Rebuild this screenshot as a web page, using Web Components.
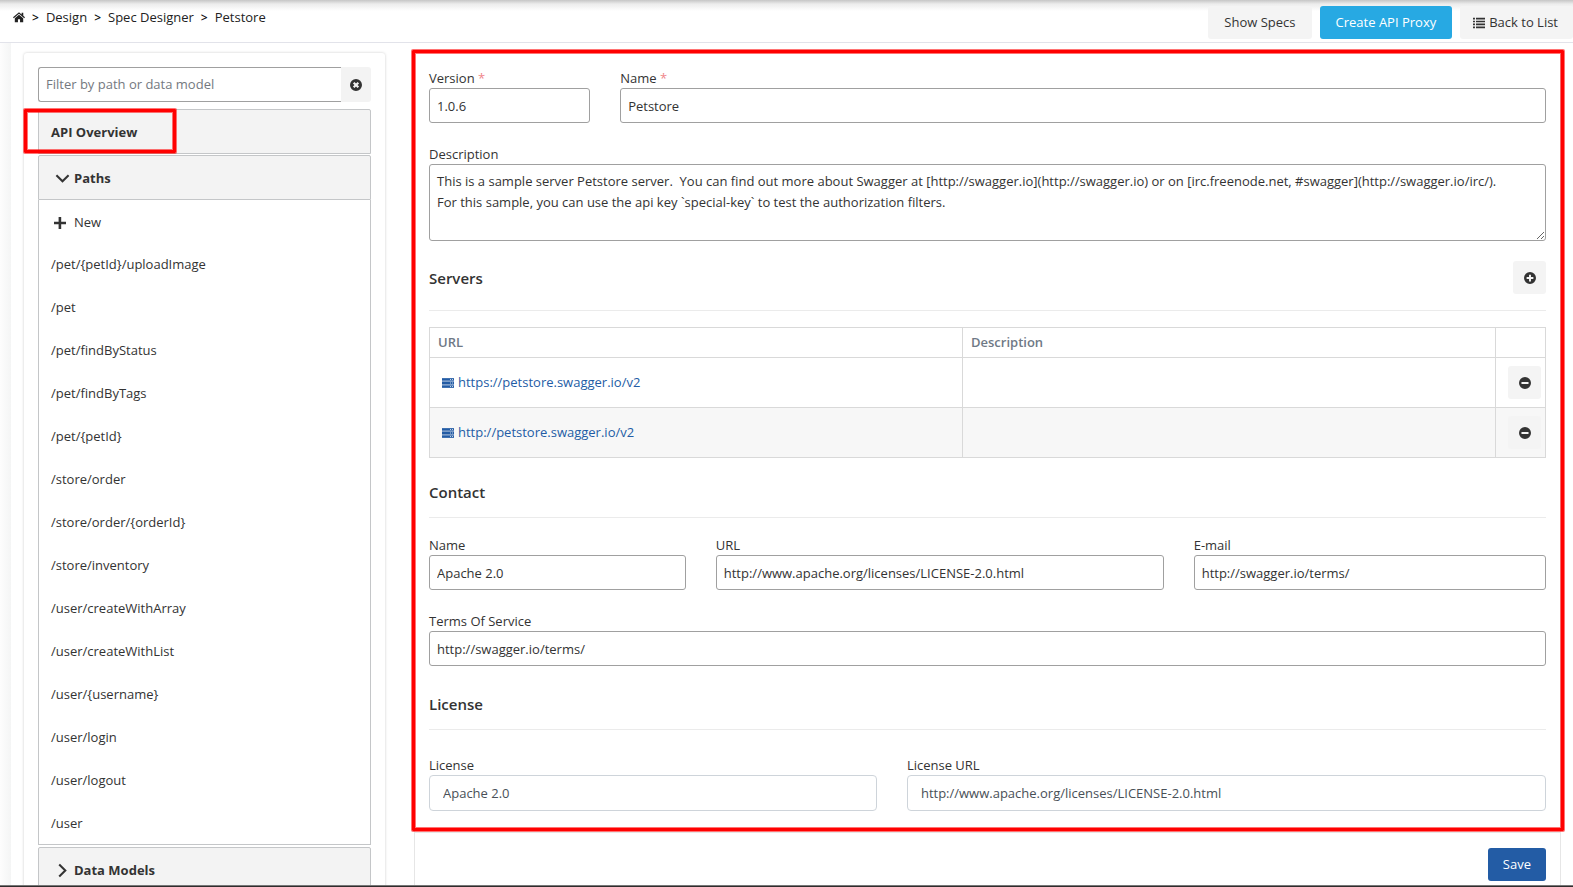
<!DOCTYPE html>
<html lang="en">
<head>
<meta charset="utf-8">
<title>Spec Designer - Petstore</title>
<style>
html,body{margin:0;height:100%}
body{font:13px/21px "Open Sans","Noto Sans",sans-serif;color:#333;background:#fff}
</style>
</head>
<body>
<spec-app></spec-app>
<script>
const define=(name,html,setup)=>customElements.define(name,class extends HTMLElement{
  connectedCallback(){
    if(this.shadowRoot)return;
    const root=this.attachShadow({mode:'open'});
    root.innerHTML='<style>*{box-sizing:border-box}:host{box-sizing:border-box}</style>'+(typeof html==='function'?html(this):html);
    if(setup)setup(this,root);
  }
});

const icons={
  home:['0 0 16 16','<path d="M8 1.6 0 8.4l1.1 1.2L8 3.8l6.9 5.8L16 8.4l-2.3-2V2.2h-2.2v2.3z"/><path d="M8 5 2.4 9.7V15h4.2v-4h2.8v4h4.2V9.700z"/>'],
  list:['0 0 16 14','<path d="M0 0h2.600v2.200H0zM4 0h12v2.200H4zM0 3.900h2.600v2.200H0zM4 3.900h12v2.200H4zM0 7.800h2.600V10H0zM4 7.800h12V10H4zM0 11.700h2.600v2.200H0zM4 11.700h12v2.200H4z"/>'],
  times:['0 0 16 16','<path fill-rule="evenodd" d="M8 0a8 8 0 1 0 0 16A8 8 0 0 0 8 0zM5.900 3.900 8 6l2.100-2.100 2 2L10 8l2.100 2.100-2 2L8 10l-2.100 2.100-2-2L6 8 3.900 5.900z"/>'],
  plusCircle:['0 0 16 16','<path fill-rule="evenodd" d="M8 0a8 8 0 1 0 0 16A8 8 0 0 0 8 0zM6.700 3.500h2.600v3.200h3.200v2.600H9.300v3.200H6.700V9.300H3.500V6.700h3.200z"/>'],
  minusCircle:['0 0 16 16','<path fill-rule="evenodd" d="M8 0a8 8 0 1 0 0 16A8 8 0 0 0 8 0zM3.300 6.600h9.400v2.800H3.300z"/>'],
  plus:['0 0 12 12','<path d="M4.600 0h2.600v4.700H12v2.500H7.200V12H4.600V7.200H0V4.700h4.600z"/>'],
  down:['0 0 16 16','<path d="m1.500 4.500 6.500 6.500 6.500-6.500" fill="none" stroke="currentColor" stroke-width="2.200"/>'],
  right:['0 0 16 16','<path d="m4.500 1.500 6.500 6.500-6.500 6.500" fill="none" stroke="currentColor" stroke-width="2.200"/>'],
  server:['0 0 12 12','<path d="M0 1h12v10H0z" opacity=".45"/><path d="M0 1.200h12v2.400H0zM0 4.800h12v2.400H0zM0 8.400h12v2.400H0z"/><path d="M8 2h1v1H8zM10 2h1v1h-1zM8 5.500h1v1H8zM10 5.500h1v1h-1zM8 9h1v1H8zM10 9h1v1h-1z" fill="#fff" opacity=".7"/>']
};
define('ui-icon',el=>{
  const [box,art]=icons[el.getAttribute('name')];
  const w=el.getAttribute('size')||12;
  return `<style>:host{display:inline-flex;flex:none}svg{display:block}</style>
  <svg width="${w}" height="${w}" viewBox="${box}" fill="currentColor" aria-hidden="true">${art}</svg>`;
});

define('ui-button',el=>`<style>
:host{display:block;flex:none}
button{display:flex;align-items:center;justify-content:center;gap:4px;width:100%;height:33px;padding:0 16px;border:0;border-radius:3px;background:#f4f4f4;color:#333;font:inherit}
button.info{background:#27a9e3;color:#fff}
button.primary{background:#235ca5;color:#fff;padding:0 15px}
button.square{width:33px;padding:0}
button.list{padding:0 15px 0 13px}
</style><button type="button" class="${el.getAttribute('kind')||''}" aria-label="${el.getAttribute('label')||el.textContent.trim()}"><slot></slot></button>`);

/* Highlight frame laid over the area it marks */
define('ui-callout',`<style>
:host{position:absolute;display:block;pointer-events:none;border:3px solid #f00;border-radius:1px;box-shadow:0 0 0 1px rgba(255,0,0,.55),inset 0 0 0 1px rgba(255,0,0,.55);z-index:1}
</style>`);

define('app-header',`<style>
:host{display:flex;justify-content:space-between;height:43px;flex:none;border-bottom:1px solid #e2e3ea;background:linear-gradient(#c6c6c6,#ececec 4px,#fff 11px);padding:6px 0 0 13px}
nav{display:flex;align-items:center;height:22px;gap:7px;color:#222}
.sep{font-size:12px;font-weight:600;color:#111}
a{color:inherit;text-decoration:none;display:flex}
.actions{display:flex;gap:8px}
</style>
<nav aria-label="Breadcrumb"><a href="#home" aria-label="Home"><ui-icon name="home" size="12"></ui-icon></a><span class="sep">&gt;</span><a href="#design">Design</a><span class="sep">&gt;</span><a href="#designer">Spec Designer</a><span class="sep">&gt;</span><span>Petstore</span></nav>
<div class="actions"><ui-button>Show Specs</ui-button><ui-button kind="info">Create API Proxy</ui-button><ui-button kind="list"><ui-icon name="list" size="12"></ui-icon>Back to List</ui-button></div>`);

const paths=['/pet/{petId}/uploadImage','/pet','/pet/findByStatus','/pet/findByTags','/pet/{petId}','/store/order','/store/order/{orderId}','/store/inventory','/user/createWithArray','/user/createWithList','/user/{username}','/user/login','/user/logout','/user'];
define('spec-sidebar',`<style>
:host{display:block;padding:14px;border-radius:3px;box-shadow:0 0 3px rgba(0,0,0,.2)}
.filter{display:flex;height:35px;margin-bottom:7px}
input{flex:1;min-width:0;border:1px solid #a0a0a0;border-right:0;border-radius:3px 0 0 3px;padding:0 7px;font:inherit;color:#333;background:#fff}
input::placeholder{color:#747980;opacity:1}
.filter button{width:30px;border:0;border-radius:0 3px 3px 0;background:#f3f3f3;color:#333;display:flex;align-items:center;justify-content:center;padding:0}
.bar{position:relative;display:flex;height:45px;margin-bottom:1px;border:1px solid #c4c6c8;border-radius:2px 2px 0 0;background:#f3f3f3}
.bar button{display:flex;align-items:center;gap:4px;width:100%;border:0;background:none;font:inherit;font-weight:700;color:#333;padding:2px 12px 0;text-align:left}
.bar .tree{padding-left:16px}
.open{margin:0}
ul{list-style:none;margin:0 0 2px;padding:0;border:1px solid #c4c6c8;border-top:0}
li a{display:flex;align-items:center;gap:8px;padding:12px 12px 10px;color:#333;text-decoration:none}
li .new{padding:12px 15px 9px}
ui-callout{inset:-1px 194px 0 -15px}
</style>
<div class="filter"><input type="text" aria-label="Filter" placeholder="Filter by path or data model"><button type="button" aria-label="Clear filter"><ui-icon name="times" size="12"></ui-icon></button></div>
<div class="bar"><button type="button">API Overview</button><ui-callout></ui-callout></div>
<div class="bar open"><button type="button" class="tree"><ui-icon name="down" size="15"></ui-icon>Paths</button></div>
<ul><li><a class="new" href="#new"><ui-icon name="plus" size="12"></ui-icon>New</a></li>${paths.map(p=>`<li><a href="#${p}">${p}</a></li>`).join('')}</ul>
<div class="bar"><button type="button" class="tree"><ui-icon name="right" size="15"></ui-icon>Data Models</button></div>`);

define('form-field',el=>{
  const a=n=>el.getAttribute(n)||'';
  const area=el.hasAttribute('multiline');
  return `<style>
:host{display:block;min-width:0;grid-column:span ${a('span')||12}}
label{display:block;height:20px;line-height:20px}
i{font-style:normal;color:#f0868a}
input,textarea{display:block;width:100%;height:35px;border:1px solid #a0a0a0;border-radius:3px;padding:0 7px;background:#fff;color:#333;font:inherit}
textarea{height:77px;padding:6px 7px;overflow:hidden;resize:vertical}
.soft{height:36px;border-color:#ced4da;border-radius:4px;padding:0 13px;color:#495057}
</style><label for="f">${a('label')}${el.hasAttribute('required')?' <i>*</i>':''}</label>${area?'<textarea id="f"></textarea>':`<input id="f" type="text" class="${a('look')}">`}`;
},(el,root)=>{root.getElementById('f').value=el.getAttribute('value')});

define('section-title',`<style>
:host{display:flex;align-items:center;justify-content:space-between;border-bottom:1px solid #ebebeb}
h2{margin:0;font-size:15px;line-height:24px;font-weight:600;color:#333}
</style><h2><slot></slot></h2><slot name="action"></slot>`);

define('servers-table',`<style>
:host{display:block}
table{width:100%;table-layout:fixed;border-collapse:collapse}
th,td{border:1px solid #d9d9d9;padding:0 8px;text-align:left}
th{height:30px;color:#6f7986;font-weight:600}
td{height:50px;padding:0 12px}
th:last-child,td:last-child{width:50px}
td:last-child{padding:0 4px 0 12px}
tbody tr:nth-child(2){background:#f7f7f7}
a{display:flex;align-items:center;gap:4px;color:#235ca5;text-decoration:none}
</style><table><thead><tr><th>URL</th><th>Description</th><th></th></tr></thead><tbody>
${['https://petstore.swagger.io/v2','http://petstore.swagger.io/v2'].map(u=>`<tr><td><a href="${u}"><ui-icon name="server" size="12"></ui-icon>${u}</a></td><td></td><td><ui-button kind="square" label="Remove server"><ui-icon name="minusCircle" size="12"></ui-icon></ui-button></td></tr>`).join('')}
</tbody></table>`);

define('spec-form',`<style>
:host{display:block;position:relative;border:1px solid #e6e6e6;border-top:0;padding:15px 14px 21px}
.grid{display:grid;grid-template-columns:repeat(12,minmax(0,1fr));column-gap:30px;row-gap:21px}
.servers{padding:20px 0 16px;margin-bottom:16px}
.contact{padding:22px 0 13px;margin-bottom:17px}
.license{padding:26px 0 13px;margin-bottom:25px}
ui-callout{inset:-3px -4px 1px -3px}
</style>
<div class="grid">
<form-field span="2" label="Version" required value="1.0.6"></form-field>
<form-field span="10" label="Name" required value="Petstore"></form-field>
<form-field multiline label="Description" value="This is a sample server Petstore server.  You can find out more about Swagger at [http://swagger.io](http://swagger.io) or on [irc.freenode.net, #swagger](http://swagger.io/irc/).
For this sample, you can use the api key \`special-key\` to test the authorization filters."></form-field>
</div>
<section-title class="servers">Servers<ui-button slot="action" kind="square" label="Add server"><ui-icon name="plusCircle" size="12"></ui-icon></ui-button></section-title>
<servers-table></servers-table>
<section-title class="contact">Contact</section-title>
<div class="grid">
<form-field span="3" label="Name" value="Apache 2.0"></form-field>
<form-field span="5" label="URL" value="http://www.apache.org/licenses/LICENSE-2.0.html"></form-field>
<form-field span="4" label="E-mail" value="http://swagger.io/terms/"></form-field>
<form-field label="Terms Of Service" value="http://swagger.io/terms/"></form-field>
</div>
<section-title class="license">License</section-title>
<div class="grid">
<form-field span="5" look="soft" label="License" value="Apache 2.0"></form-field>
<form-field span="7" look="soft" label="License URL" value="http://www.apache.org/licenses/LICENSE-2.0.html"></form-field>
</div>
<ui-callout></ui-callout>`);

define('spec-app',`<style>
:host{display:flex;flex-direction:column;height:100vh;overflow:hidden}
main{flex:1;min-height:0;overflow:hidden;display:grid;grid-template-columns:11px 374px minmax(0,1fr);align-items:start}
.edge{align-self:stretch;background:linear-gradient(to right,#fdfdfd,#f4f5f5)}
spec-sidebar{margin:10px 0 0 13px}
.work{margin:10px 12px 0 29px}
.save{display:flex;justify-content:flex-end;border:solid #e6e6e6;border-width:0 1px;padding:15px 14px 20px}
footer{flex:none;height:2px;background:#302c2c;border-top:1px solid #777}
</style>
<app-header></app-header>
<main><div class="edge"></div><spec-sidebar></spec-sidebar><div class="work"><spec-form></spec-form><div class="save"><ui-button kind="primary">Save</ui-button></div></div></main>
<footer></footer>`);
</script>
</body>
</html>
